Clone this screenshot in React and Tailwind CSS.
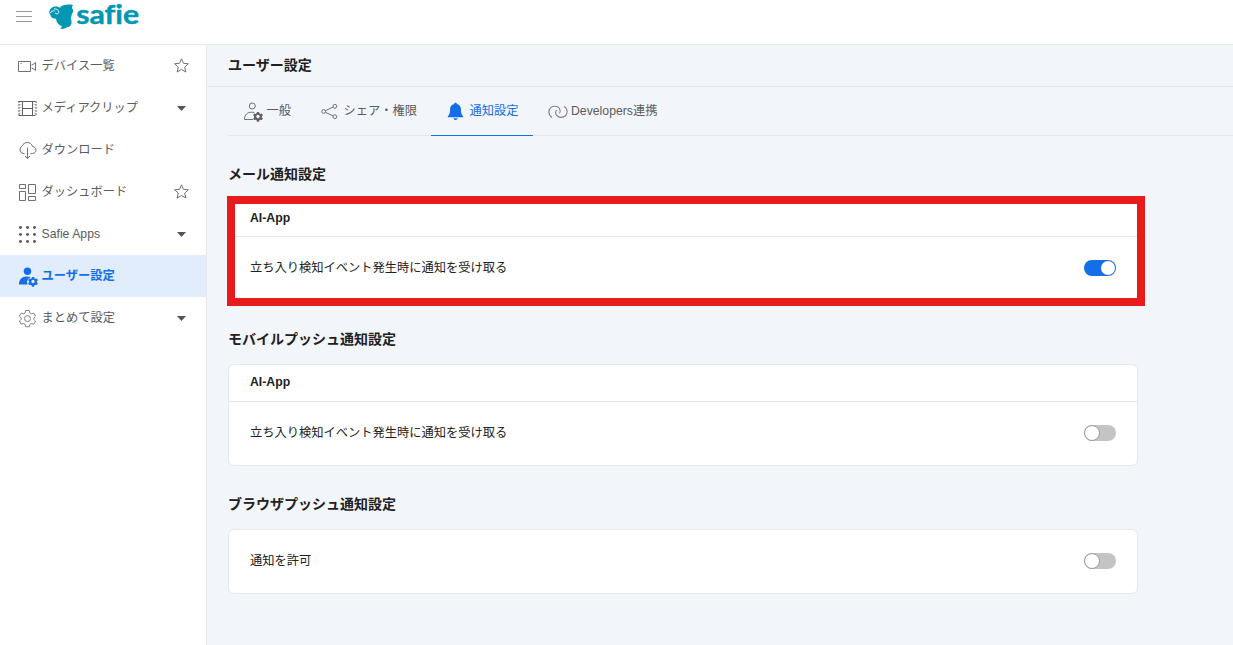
import { useState } from 'react'

function VideoIcon() {
  return (
    <svg width="21" height="21" viewBox="0 0 21 21" fill="none" stroke="#707070" strokeWidth="1">
      <path d="M1.5 5.5h12v10h-12zM14.5 9l1.500-.5 2.500-2v8l-2.500-2-1.500-.5" />
      <path d="M3.5 7.5h1" />
    </svg>
  )
}

function FilmIcon() {
  return (
    <svg width="21" height="21" viewBox="0 0 21 21" fill="none" stroke="#606060" strokeWidth="1">
      <path d="M1.500 3.500h17M1.500 17.500h17M5 10.500h11M5.500 3.500v14M15.500 3.500v14" />
      <path d="M2 3v15M19 3v15" strokeDasharray="2 1" />
      <path d="M2.500 6.500h2M2.500 9.500h2M2.500 12.500h2M2.500 15h2M16.500 6.500h2M16.500 9.500h2M16.500 12.500h2M16.500 15h2" opacity=".35" />
    </svg>
  )
}

function DownloadIcon() {
  return (
    <svg width="21" height="21" viewBox="0 0 21 21" fill="none" stroke="#707070" strokeWidth="1">
      <path d="M7.5 13.5H6A4 4 0 0 1 5.3 6C6 3.8 8 2.5 10.2 2.5c2.7 0 4.7 1.6 5.300 4 2 .2 3.500 1.600 3.500 3.500s-1.500 3.500-3.500 3.500h-2" />
      <path d="M10.5 7.5v11M8 16l2.500 2.500L13 16" />
    </svg>
  )
}

function DashboardIcon() {
  return (
    <svg width="21" height="21" viewBox="0 0 21 21" fill="none" stroke="#707070" strokeWidth="1">
      <path d="M2.500 2.500h6v4h-6zM2.500 9.500h6v9h-6zM11.500 2.500h7v9h-7zM11.500 14.500h7v4h-7z" />
    </svg>
  )
}

function AppsIcon() {
  return (
    <svg width="21" height="21" viewBox="0 0 21 21" fill="#555">
      {[3.5, 10.5, 17.5].map((y) =>
        [3.5, 10.5, 17.5].map((x) => <circle key={`${x}-${y}`} cx={x} cy={y} r="1.4" />)
      )}
    </svg>
  )
}

const TEETH = 'M-1-4.600h2l.4 1.400 1.100.6 1.400-.5 1 1.800-1 1v1.200l1 1-1 1.700-1.400-.4-1.100.6-.4 1.400h-2l-.4-1.400-1.100-.6-1.400.4-1-1.700 1-1v-1.200l-1-1 1-1.800 1.400.5 1.100-.6z'

function UserGearIcon({ solid = false }) {
  return (
    <svg width="21" height="21" viewBox="0 0 21 21" fill={solid ? '#146ee8' : 'none'} stroke={solid ? 'none' : '#707070'}>
      <circle cx={solid ? 10.5 : 10.3} cy={solid ? 5.2 : 5} r={solid ? 3.7 : 3} />
      <path d={solid ? 'M2 18.500c0-5.300 3-8 7.500-8 1.800 0 3.300.3 4.500 1-3.300.6-4.800 3.700-3.300 7z' : 'M11 18.500H2.500c0-4.700 2.700-7.300 7-7.300 1.100 0 2 .1 2.800.4'} />
      <g transform="translate(16 15.500)" fill={solid ? '#146ee8' : '#606060'} stroke="none">
        <path fillRule="evenodd" d={`${TEETH}M0-1.700a1.700 1.700 0 1 0 .01 0z`} />
      </g>
    </svg>
  )
}

function GearIcon() {
  return (
    <svg width="21" height="21" viewBox="0 0 21 21" fill="none" stroke="#808080" strokeLinejoin="round">
      <path d="M8.7 2.500h3.600l.6 2.400 1.500.9 2.400-.7 1.800 3.100-1.800 1.700v1.500l1.800 1.700-1.800 3.100-2.400-.7-1.500.9-.6 2.300H8.700l-.6-2.300-1.500-.9-2.400.7-1.800-3.100 1.800-1.700V9.900L2.400 8.200l1.800-3.100 2.400.7 1.500-.9z" />
      <circle cx="10.500" cy="10.600" r="3" />
    </svg>
  )
}

function ShareIcon() {
  return (
    <svg width="21" height="21" viewBox="0 0 21 21" fill="none" stroke="#707070">
      <circle cx="4.700" cy="10.500" r="1.900" />
      <circle cx="15.900" cy="5.300" r="1.900" />
      <circle cx="15.900" cy="15.700" r="1.900" />
      <path d="M6.500 9.600l7.600-3.500M6.500 11.400l7.600 3.500" />
    </svg>
  )
}

function BellIcon() {
  return (
    <svg width="21" height="21" viewBox="0 0 21 21" fill="#146ee8">
      <path d="M10.500 1.700c.8 0 1.300.5 1.400 1.200 2.500.6 4 2.600 4 5.100 0 3.700.5 5.500 2.300 7.200v1H2.800v-1C4.600 13.500 5.100 11.700 5.100 8c0-2.500 1.500-4.500 4-5.100.1-.7.6-1.200 1.400-1.200z" />
      <path d="M8.500 17.300h4c-.2 1.200-1 1.800-2 1.800s-1.800-.6-2-1.800z" />
    </svg>
  )
}

function LinkIcon() {
  return (
    <svg width="21" height="21" viewBox="0 0 21 21" fill="none" stroke="#808080" strokeWidth="1.100" className="overflow-visible">
      <path d="M5 16.200C3 15 1.900 13 1.900 10.900c0-3.200 2.500-5.700 5.700-5.700 3 0 5.300 1.900 5.600 4.700.1 1.200-.2 2-1 2.500" />
      <path d="M17 5.400c2 1.200 3.100 3.200 3.100 5.300 0 3.200-2.500 5.700-5.700 5.700-3.200 0-5.600-2.200-5.800-4.700-.1-1.200.3-2 1.100-2.500" />
    </svg>
  )
}

function StarIcon() {
  return (
    <svg width="15" height="15" viewBox="0 0 15 15" fill="none" stroke="#707070" strokeWidth="1" strokeLinejoin="round" className="-mt-px">
      <path d="M7.500.8l2 4.500 4.900.5-3.700 3.300 1.100 4.900-4.300-2.500L3.200 14l1.100-4.900L.6 5.800l4.900-.5z" />
    </svg>
  )
}

function Caret() {
  return (
    <svg width="9" height="5" viewBox="0 0 9 5" fill="#555" className="mr-[3px]">
      <path d="M0 0h9L4.500 5z" />
    </svg>
  )
}

function Logo() {
  return (
    <svg width="96" height="36" viewBox="0 0 96 36" fill="#0097b2">
      <path d="M1.200 12.800C1.600 9 4 6.600 7.500 6.600c1.800 0 3.200.4 4.400 1.200C14 5 18.500 3.900 25.300 5c-1.300 1-1.700 2.400-.9 3.700.9 1.500 1.200 3 .1 4.200-.5.6-.9 1.100-.8 1.700.3 1.700-1.200 2.600-.9 3.800.3 1.400 1.100 2.700.7 4.700-.5 2.500-1.900 4-4 4.200-1.500.1-2.200 1.300-4 1.500-1.300.2-2.200 0-3.300-.5 1.300-.6 1.800-1.300 1.500-2.300-3-1-5.500-3.500-5.600-7.200-2.700.1-5.200-1.200-5.600-3.600z" />
      <g fill="none" stroke="#fff" strokeWidth=".9">
        <path d="M2.300 13.300C3 11.300 5 10.400 6.800 11M5.800 9c2.800-.6 5.300 1.200 5 3.300-.3 1.800-2.900 2.200-3.600.7" />
      </g>
      <text
        x="28.200"
        y="24.300"
        textLength="63"
        lengthAdjust="spacingAndGlyphs"
        className="font-[Lato,sans-serif] text-[26px] font-bold [font-variant-ligatures:none]"
        stroke="#0097b2"
        strokeWidth=".4"
      >
        safie
      </text>
    </svg>
  )
}

const menuItems = [
  { name: 'デバイス一覧', icon: VideoIcon, right: 'star' },
  { name: 'メディアクリップ', icon: FilmIcon, right: 'caret' },
  { name: 'ダウンロード', icon: DownloadIcon },
  { name: 'ダッシュボード', icon: DashboardIcon, right: 'star' },
  { name: 'Safie Apps', icon: AppsIcon, right: 'caret' },
  { name: 'ユーザー設定', icon: UserGearIcon, active: true },
  { name: 'まとめて設定', icon: GearIcon, right: 'caret' },
]

const tabs = [
  { name: '一般', icon: UserGearIcon },
  { name: 'シェア・権限', icon: ShareIcon },
  { name: '通知設定', icon: BellIcon },
  { name: 'Developers連携', icon: LinkIcon },
]

function Toggle({ on, onChange, label }) {
  return (
    <button
      type="button"
      role="switch"
      aria-checked={on}
      aria-label={label}
      onClick={() => onChange(!on)}
      className={`flex h-4 w-8 items-center rounded-full ${on ? 'justify-end bg-[#146ee8] pr-px' : 'justify-start bg-[#c4c4c4]'}`}
    >
      <span className={`rounded-full bg-white ${on ? 'size-3.5' : 'size-4 border border-[#999]'}`} />
    </button>
  )
}

function Section({ title, header, label, defaultOn = false, highlight = false }) {
  const [on, setOn] = useState(defaultOn)

  return (
    <section className="mb-[25px]">
      <h2 className="mb-[13px] h-[25px] text-sm leading-[26px] font-bold">{title}</h2>
      <div className="relative w-[910px] rounded-md border border-[#e6e8ea] bg-white">
        {header && (
          <div className={`h-[37px] border-b border-[#e6e8ea] px-[21px] font-bold ${highlight ? 'leading-[37px]' : 'leading-[35px]'}`}>
            {header}
          </div>
        )}
        <div className="flex h-[63px] items-center justify-between px-[21px] pb-0.5">
          <span className="pt-0.5">{label}</span>
          <Toggle on={on} onChange={setOn} label={label} />
        </div>
        {highlight && (
          <div className="pointer-events-none absolute -top-1 -left-0.5 h-[110px] w-[918px] border-8 border-[#e71b1b]" />
        )}
      </div>
    </section>
  )
}

export default function App() {
  const [tab, setTab] = useState('通知設定')

  return (
    <div className="flex h-screen flex-col overflow-hidden bg-white font-['Liberation_Sans','Noto_Sans_CJK_JP',sans-serif] text-[12.25px] text-[#212121]">
      <header className="flex h-[45px] shrink-0 items-start border-b border-[#e6e8ea] pl-4">
        <svg width="16" height="32" viewBox="0 0 16 32" stroke="#999" className="mr-4">
          <path d="M0 11.500h16M0 16.500h16M0 21.500h16" />
        </svg>
        <Logo />
      </header>

      <div className="flex min-h-0 flex-1">
        <nav className="w-[207px] shrink-0 border-r border-[#e6e8ea]">
          {menuItems.map((item) => {
            const Icon = item.icon
            return (
              <a
                key={item.name}
                href="#"
                className={`flex h-[42px] items-center pr-[17px] pl-[17px] ${item.active ? 'bg-[#e1ecfd] font-bold text-[#146ee8]' : 'text-[#5c5c5c]'}`}
              >
                <span className="mr-[3.5px]">
                  <Icon solid={item.active} />
                </span>
                <span className="flex-1 pt-px">{item.name}</span>
                {item.right === 'star' && <StarIcon />}
                {item.right === 'caret' && <Caret />}
              </a>
            )
          })}
        </nav>

        <main className="flex-1 bg-[#f2f5fa]">
          <h1 className="h-[42px] border-b border-[#e6e8ea] pl-[21px] text-sm leading-[40px] font-bold">ユーザー設定</h1>

          <div className="ml-[21px] flex h-[49px] border-b border-[#e6e8ea]">
            {tabs.map((t) => {
              const Icon = t.icon
              const active = t.name === tab
              return (
                <button
                  key={t.name}
                  type="button"
                  onClick={() => setTab(t.name)}
                  className={`-mb-px flex h-[49px] items-center border-b px-[14px] ${active ? 'border-[#146ee8] text-[#146ee8]' : 'border-transparent text-[#5c5c5c]'}`}
                >
                  <span className="mt-px mr-[3.5px]">
                    <Icon />
                  </span>
                  <span>{t.name}</span>
                </button>
              )
            })}
          </div>

          <div className="pt-[25px] pl-[21px]">
            <Section title="メール通知設定" header="AI-App" label="立ち入り検知イベント発生時に通知を受け取る" defaultOn highlight />
            <Section title="モバイルプッシュ通知設定" header="AI-App" label="立ち入り検知イベント発生時に通知を受け取る" />
            <Section title="ブラウザプッシュ通知設定" label="通知を許可" />
          </div>
        </main>
      </div>
    </div>
  )
}
